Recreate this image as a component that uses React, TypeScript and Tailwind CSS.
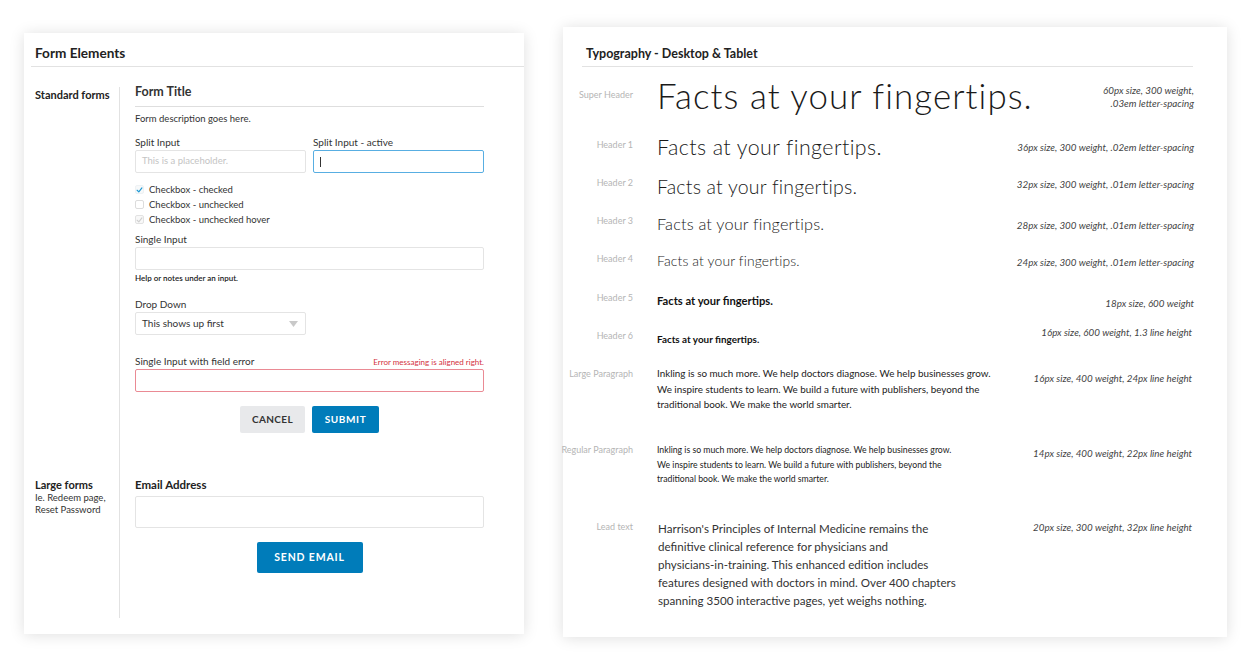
import React from "react";

const F = { fontFamily: "Lato, 'Noto Sans', sans-serif" } as React.CSSProperties;

function Check({ color }: { color: string }) {
  return (
    <svg width="8" height="8" viewBox="0 0 8 8" className="block">
      <path d="M1.3 4.3 L3.2 6.1 L6.8 1.6" fill="none" stroke={color} strokeWidth="1.3" strokeLinecap="round" strokeLinejoin="round" />
    </svg>
  );
}

function CheckRow({ label, state }: { label: string; state: "checked" | "unchecked" | "hover" }) {
  return (
    <div className="flex items-center h-[15px]">
      <div
        className={
          state === "checked"
            ? "w-[9px] h-[9px] rounded-[2px] border border-[color:#eef2f4] bg-[#f7f9fa] flex items-center justify-center"
            : state === "hover"
            ? "w-[9px] h-[9px] rounded-[2px] border border-[color:#e2e2e2] bg-[#f8f8f8] flex items-center justify-center"
            : "w-[9px] h-[9px] rounded-[2px] border border-[color:#dcdcdc] bg-white"
        }
      >
        {state === "checked" && <Check color="#1c98d4" />}
        {state === "hover" && <Check color="#cfcfcf" />}
      </div>
      <span className="ml-[5px] text-[9.5px] leading-[12px] text-[#333]">{label}</span>
    </div>
  );
}

function Label({ children }: { children: React.ReactNode }) {
  return <div className="text-[10px] leading-[12px] text-[#333]">{children}</div>;
}

function FormCard() {
  return (
    <div className="ml-[24px] mt-[33px] w-[500px] h-[601px] bg-white shadow-[0_1px_14px_rgba(0,0,0,0.13)] flex flex-col pb-[16px]">
      <div className="ml-[7px] pl-[4px] h-[34px] pt-[12px] border-b border-[color:#e2e2e2]">
        <div className="text-[13.6px] leading-[16px] font-bold text-[#222]">Form Elements</div>
      </div>
      <div className="flex-1 flex flex-col pt-[20px]">
        <div className="flex">
          <div className="w-[95px] pl-[11px] pt-[1px]">
            <div className="text-[11px] leading-[14px] font-bold text-[#222]">Standard forms</div>
          </div>
          <div className="border-l border-[color:#e2e2e2] pl-[15px] pb-[45px]">
            <div className="w-[349px]">
              <div className="pb-[9px] border-b border-[color:#dedede]">
                <div className="text-[12.5px] leading-[10px] font-bold text-[#333]">Form Title</div>
              </div>
              <div className="mt-[6px] text-[9.5px] leading-[12px] text-[#333]">Form description goes here.</div>
              <div className="mt-[11px] grid grid-cols-2 gap-x-[7px]">
                <div>
                  <Label>Split Input</Label>
                  <div className="mt-[2px] h-[23px] border border-[color:#e4e4e4] rounded-[2px] flex items-center pl-[6px] text-[9.5px] text-[#c4c4c4]">
                    This is a placeholder.
                  </div>
                </div>
                <div>
                  <Label>Split Input - active</Label>
                  <div className="mt-[2px] h-[23px] border border-[color:#58aee2] rounded-[2px] flex items-center pl-[6px]">
                    <div className="w-px h-[10px] bg-[#333]" />
                  </div>
                </div>
              </div>
              <div className="mt-[9px] flex flex-col">
                <CheckRow label="Checkbox - checked" state="checked" />
                <CheckRow label="Checkbox - unchecked" state="unchecked" />
                <CheckRow label="Checkbox - unchecked hover" state="hover" />
              </div>
              <div className="mt-[6px]">
                <Label>Single Input</Label>
                <div className="mt-[2px] h-[23px] border border-[color:#e4e4e4] rounded-[2px]" />
                <div className="mt-[3px] text-[8px] leading-[10px] font-semibold text-[#222]">Help or notes under an input.</div>
              </div>
              <div className="mt-[15px]">
                <Label>Drop Down</Label>
                <div className="mt-[2px] w-[171px] h-[23px] border border-[color:#e4e4e4] rounded-[2px] flex items-center justify-between pl-[6px] pr-[7px]">
                  <span className="text-[10px] text-[#333]">This shows up first</span>
                  <svg width="9" height="6" viewBox="0 0 9 6" className="block">
                    <polygon points="0,0 9,0 4.5,6" fill="#c9c9c9" />
                  </svg>
                </div>
              </div>
              <div className="mt-[20px]">
                <div className="flex items-end justify-between">
                  <Label>Single Input with field error</Label>
                  <div className="text-[8px] leading-[10px] text-[#d3323e]">Error messaging is aligned right.</div>
                </div>
                <div className="mt-[2px] h-[23px] border border-[color:#ea8a94] bg-white rounded-[2px]" />
              </div>
              <div className="mt-[14px] flex justify-center gap-[7px]">
                <div className="w-[65px] h-[27px] bg-[#e8e9eb] rounded-[2px] flex items-center justify-center text-[10px] font-bold tracking-[0.04em] text-[#333]">
                  CANCEL
                </div>
                <div className="w-[67px] h-[27px] bg-[#007cba] rounded-[2px] flex items-center justify-center text-[10px] font-bold tracking-[0.06em] text-white">
                  SUBMIT
                </div>
              </div>
            </div>
          </div>
        </div>
        <div className="flex flex-1">
          <div className="w-[95px] pl-[11px]">
            <div className="text-[11px] leading-[14px] font-bold text-[#222]">Large forms</div>
            <div className="text-[9.5px] leading-[12px] text-[#333]">Ie. Redeem page,</div>
            <div className="text-[9.5px] leading-[12px] text-[#333]">Reset Password</div>
          </div>
          <div className="border-l border-[color:#e2e2e2] pl-[15px]">
            <div className="w-[349px]">
              <div className="text-[11.5px] leading-[14px] font-bold text-[#222]">Email Address</div>
              <div className="mt-[4px] h-[32px] border border-[color:#e4e4e4] rounded-[2px]" />
              <div className="mt-[14px] flex justify-center">
                <div className="w-[106px] h-[31px] bg-[#007cba] rounded-[2px] flex items-center justify-center text-[10.5px] font-bold tracking-[0.08em] text-white">
                  SEND EMAIL
                </div>
              </div>
            </div>
          </div>
        </div>
      </div>
    </div>
  );
}

type RowProps = {
  label: string;
  lm: string;
  tm: string;
  sm: string;
  sample: React.ReactNode;
  spec: React.ReactNode;
  hClass: string;
};

function TypoRow({ label, lm, tm, sm, sample, spec, hClass }: RowProps) {
  return (
    <div className={"flex " + hClass}>
      <div className={"w-[70px] shrink-0 flex justify-end " + lm}>
        <div className="whitespace-nowrap text-[9px] leading-[12px] text-[#b5b5b5]">{label}</div>
      </div>
      <div className={"ml-[24px] flex-1 " + tm}>{sample}</div>
      <div className={"pr-[33px] text-right text-[9.8px] leading-[13px] italic text-[#444] " + sm}>{spec}</div>
    </div>
  );
}

function TypeCard() {
  return (
    <div className="ml-[39px] mt-[27px] w-[664px] h-[610px] bg-white shadow-[0_1px_14px_rgba(0,0,0,0.13)] flex flex-col">
      <div className="ml-[19px] w-[611px] pl-[4px] pt-[19px] pb-[4px] border-b border-[color:#e2e2e2]">
        <div className="text-[12.5px] leading-[16px] font-bold text-[#222]">Typography - Desktop &amp; Tablet</div>
      </div>
      <TypoRow
        hClass="h-[59px]"
        label="Super Header"
        lm="mt-[22px]"
        tm="mt-[8px]"
        sm="mt-[17px]"
        sample={<div className="whitespace-nowrap text-[34.9px] leading-[42px] font-light tracking-[0.03em] text-[#1a1a1a]">Facts at your fingertips.</div>}
        spec={<><div>60px size, 300 weight,</div><div>.03em letter-spacing</div></>}
      />
      <TypoRow
        hClass="h-[40px]"
        label="Header 1"
        lm="mt-[13px]"
        tm="mt-[7px]"
        sm="mt-[15px]"
        sample={<div className="whitespace-nowrap text-[21.4px] leading-[28px] font-light tracking-[0.02em] text-[#1a1a1a]">Facts at your fingertips.</div>}
        spec="36px size, 300 weight, .02em letter-spacing"
      />
      <TypoRow
        hClass="h-[38px]"
        label="Header 2"
        lm="mt-[11px]"
        tm="mt-[8px]"
        sm="mt-[12px]"
        sample={<div className="whitespace-nowrap text-[19.5px] leading-[26px] font-light tracking-[0.01em] text-[#1a1a1a]">Facts at your fingertips.</div>}
        spec="32px size, 300 weight, .01em letter-spacing"
      />
      <TypoRow
        hClass="h-[38px]"
        label="Header 3"
        lm="mt-[11px]"
        tm="mt-[9px]"
        sm="mt-[15px]"
        sample={<div className="whitespace-nowrap text-[16.3px] leading-[22px] font-light tracking-[0.01em] text-[#1a1a1a]">Facts at your fingertips.</div>}
        spec="28px size, 300 weight, .01em letter-spacing"
      />
      <TypoRow
        hClass="h-[38px]"
        label="Header 4"
        lm="mt-[11px]"
        tm="mt-[9px]"
        sm="mt-[14px]"
        sample={<div className="whitespace-nowrap text-[13.9px] leading-[20px] font-light tracking-[0.01em] text-[#1a1a1a]">Facts at your fingertips.</div>}
        spec="24px size, 300 weight, .01em letter-spacing"
      />
      <TypoRow
        hClass="h-[39px]"
        label="Header 5"
        lm="mt-[12px]"
        tm="mt-[14px]"
        sm="mt-[17px]"
        sample={<div className="whitespace-nowrap text-[11.2px] leading-[14px] font-bold text-[#111]">Facts at your fingertips.</div>}
        spec="18px size, 600 weight"
      />
      <TypoRow
        hClass="h-[40px]"
        label="Header 6"
        lm="mt-[11px]"
        tm="mt-[14px]"
        sm="mt-[7px] pr-[35px]"
        sample={<div className="whitespace-nowrap text-[9.9px] leading-[13px] font-bold text-[#111]">Facts at your fingertips.</div>}
        spec="16px size, 600 weight, 1.3 line height"
      />
      <TypoRow
        hClass="h-[77px]"
        label="Large Paragraph"
        lm="mt-[9px]"
        tm="mt-[7px]"
        sm="mt-[13px] pr-[35px]"
        sample={
          <div className="whitespace-nowrap text-[9.85px] leading-[15.5px] text-[#222]">
            Inkling is so much more. We help doctors diagnose. We help businesses grow.
            <br />
            We inspire students to learn. We build a future with publishers, beyond the
            <br />
            traditional book. We make the world smarter.
          </div>
        }
        spec="16px size, 400 weight, 24px line height"
      />
      <TypoRow
        hClass="h-[75px]"
        label="Regular Paragraph"
        lm="mt-[8px]"
        tm="mt-[7px]"
        sm="mt-[11px] pr-[35px]"
        sample={
          <div className="whitespace-nowrap text-[8.7px] leading-[14.5px] text-[#222]">
            Inkling is so much more. We help doctors diagnose. We help businesses grow.
            <br />
            We inspire students to learn. We build a future with publishers, beyond the
            <br />
            traditional book. We make the world smarter.
          </div>
        }
        spec="14px size, 400 weight, 22px line height"
      />
      <TypoRow
        hClass="flex-1"
        label="Lead text"
        lm="mt-[10px]"
        tm="mt-[9px] pl-[1px]"
        sm="mt-[10px] pr-[35px]"
        sample={
          <div className="whitespace-nowrap text-[11.6px] leading-[18px] font-normal text-[#333]">
            Harrison's Principles of Internal Medicine remains the
            <br />
            definitive clinical reference for physicians and
            <br />
            physicians-in-training. This enhanced edition includes
            <br />
            features designed with doctors in mind. Over 400 chapters
            <br />
            spanning 3500 interactive pages, yet weighs nothing.
          </div>
        }
        spec="20px size, 300 weight, 32px line height"
      />
    </div>
  );
}

export default function App() {
  return (
    <div style={F} className="w-[1256px] h-[661px] bg-white flex items-start overflow-hidden">
      <FormCard />
      <TypeCard />
    </div>
  );
}
